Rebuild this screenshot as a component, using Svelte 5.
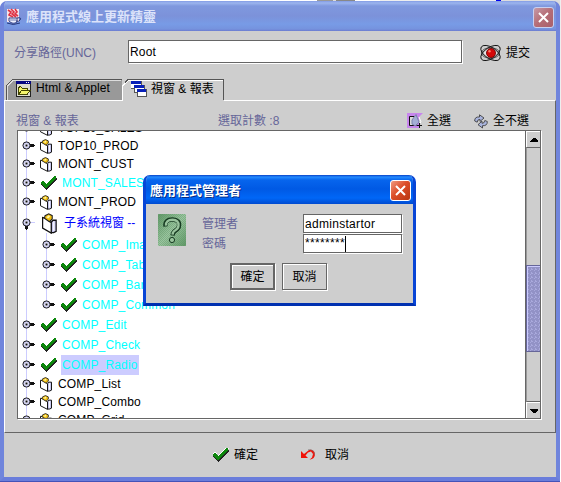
<script>
  const rows = [
    { label: 'TOP10_SALES', kind: 'book', level: 0 },
    { label: 'TOP10_PROD', kind: 'book', level: 0 },
    { label: 'MONT_CUST', kind: 'book', level: 0 },
    { label: 'MONT_SALES', kind: 'check', level: 0 },
    { label: 'MONT_PROD', kind: 'book', level: 0 },
    { label: '子系統視窗 --', kind: 'folder', level: 0 },
    { label: 'COMP_Image', kind: 'check', level: 1 },
    { label: 'COMP_Table', kind: 'check', level: 1 },
    { label: 'COMP_Bar', kind: 'check', level: 1 },
    { label: 'COMP_Common', kind: 'check', level: 1 },
    { label: 'COMP_Edit', kind: 'check', level: 0 },
    { label: 'COMP_Check', kind: 'check', level: 0 },
    { label: 'COMP_Radio', kind: 'check', level: 0, selected: true },
    { label: 'COMP_List', kind: 'book', level: 0 },
    { label: 'COMP_Combo', kind: 'book', level: 0 },
    { label: 'COMP_Grid', kind: 'book', level: 0 }
  ];
</script>

{#snippet check()}
  <svg class="check" width="18" height="15" viewBox="0 0 18 15" shape-rendering="crispEdges">
    <path class="shine" d="M1 6L3 4L6 8L14 0H17" fill="none" stroke="#fff" />
    <path d="M8 12L17 2" stroke="#999" />
    <path d="M0 7L1 8L6 14H7L17 3V1L6 12L1 7Z" fill="#222" />
    <path d="M0 7L2 5H4L6 8L14 0H16V2L6 13Z" fill="#0c870c" />
  </svg>
{/snippet}

{#snippet book()}
  <svg width="100%" height="100%" viewBox="0 0 13 16" preserveAspectRatio="none">
    <path d="M7.5 7L9 5.5H11.5V14L9.5 15H7.5Z" fill="#c4c4ee" stroke="#111" />
    <path d="M9.6 6.5V13.5" stroke="#fff" />
    <path d="M.5 3.5V11.5L7.5 15.3V7.5L3.5 4Z" fill="#fff" stroke="#111" />
    <path d="M2 4L2.5 2L5.5 .6L8.3 2V4.6L6 6.6Z" fill="#f2bf10" stroke="#222" stroke-width=".9" />
    <path d="M3.5 3.2L5.5 1.8L6.7 2.8L5 4.2Z" fill="#fff6a0" />
  </svg>
{/snippet}

<div class="desktop">
  <section class="window">
    <header class="titlebar">
      <svg class="java" width="17" height="18" viewBox="0 0 17 18">
        <rect x="1" y="1" width="12" height="13" fill="#f5e4ea" />
        <path d="M2 2L5 4L3 7L7 9M5 1L8 4L6 6L10 9M9 1L11 4L9 6L12 8" fill="none" stroke="#df3345" stroke-width="1.6" />
        <path d="M3 10H11V14Q7 17 3 13Z" fill="#edf0ff" stroke="#364285" />
        <path d="M11 10Q16 9 14 12Q13 14 10 13M1 15Q7 18 14 15" fill="none" stroke="#263679" />
        <path d="M4 12H10" stroke="#7480b4" />
      </svg>
      <h1>應用程式線上更新精靈</h1>
      <button class="close faded" aria-label="close"><svg width="11" height="11" viewBox="0 0 11 11"><path d="M1 1L10 10M10 1L1 10" /></svg></button>
    </header>

    <div class="path-row">
      <label for="share">分享路徑(UNC)</label>
      <input id="share" value="Root" />
      <button class="plain submit">
        <svg width="24" height="18" viewBox="0 0 24 18" fill="none" stroke="#111" stroke-width=".9">
          <ellipse cx="11.5" cy="9" rx="8" ry="5.5" fill="#e4e4e4" stroke="none" />
          <ellipse cx="11.5" cy="9" rx="11" ry="5.6" transform="rotate(33 11.5 9)" />
          <ellipse cx="11.5" cy="9" rx="11" ry="5.6" transform="rotate(-33 11.5 9)" />
          <ellipse cx="11.5" cy="9" rx="9" ry="5.2" stroke-width=".7" />
          <circle cx="12" cy="9" r="4.5" fill="#d40808" stroke="#700" />
          <circle cx="10.5" cy="7.2" r="1.2" fill="#ff7b66" stroke="none" />
        </svg>
        <span>提交</span>
      </button>
    </div>

    <nav>
      <button class="tab first">
        <svg class="shape" width="116" height="21" viewBox="0 0 116 21" shape-rendering="crispEdges"><path d="M0 21V7L6 0H116V21Z" fill="#999" /><path d="M.5 21V7L6.5 .5H116" fill="none" stroke="#555" /><path d="M1.5 21V7L7 1.5H115" fill="none" stroke="#ddd" /></svg>
        <svg width="16" height="16" viewBox="0 0 16 16" shape-rendering="crispEdges">
          <path d="M0.5 1.5H14.5V15.5H.5Z" fill="#deded0" stroke="#222" /><path d="M0 0H15V3H0Z" fill="#080882" /><path d="M10 1H11V2H10ZM12 1H13V2H12Z" fill="#fff" />
          <path d="M2.5 13.5V6.5L4.5 5.5L6.5 7.5H11.5V9.5H14L11 13.5Z" fill="#f4f56c" stroke="#444600" /><path d="M2.5 13.5L5.5 9.5H14" fill="none" stroke="#444600" />
        </svg>
        <span>Html &amp; Applet</span>
      </button>
      <button class="tab second">
        <svg class="shape" width="102" height="22" viewBox="0 0 102 22" shape-rendering="crispEdges"><path d="M0 22V7L6 0H102V22Z" fill="#cecece" /><path d="M0 7L6 .5H101.5V21" fill="none" stroke="#555" /><path d="M.5 22V7L6.5 1.5H101" fill="none" stroke="#fff" /></svg>
        <svg width="16" height="16" viewBox="0 0 16 16" shape-rendering="crispEdges" fill="#fff">
          <path d="M0 0H10V7H0Z" /><path d="M0 7H10V0" fill="none" stroke="#555" /><path d="M0 0H10V3H0Z" fill="#0820b8" />
          <path d="M3 4H13V11H3Z" /><path d="M3 4V11H13V4" fill="none" stroke="#555" /><path d="M3 4H13V7H3Z" fill="#0820b8" />
          <path d="M6 8H15V15H6Z" /><path d="M6 8V15H15V8" fill="none" stroke="#555" /><path d="M6 8H15V11H6Z" fill="#0820b8" />
        </svg>
        <span>視窗 &amp; 報表</span>
      </button>
    </nav>

    <main>
      <div class="tools">
        <span class="caption">視窗 &amp; 報表</span>
        <span class="count">選取計數 :8</span>
        <button class="plain all">
          <svg width="16" height="16" viewBox="0 0 16 16"><path d="M0 0H16L12 4V15H0Z" fill="#c886ed" /><path d="M2.5 3.5H9.5V12.5H2.5Z" fill="#dcdcdc" stroke="#111" /><path d="M5 11L5 7L9 1.5L12 9L8.5 13Z" fill="#a5aed5" stroke="#7b83ae" /><path d="M12 4L14 9L12 11" fill="none" stroke="#fff" /><path d="M10 12.5H15M12.5 10V15" stroke="#111" shape-rendering="crispEdges" /></svg>
          <span>全選</span>
        </button>
        <button class="plain none">
          <svg width="14" height="15" viewBox="0 0 14 15"><path d="M.7 7Q.5 2.5 5.5 3V.8L10 4L6 7.5V5.5Q3.5 5 3.2 8.2Z" fill="#a9b4dd" stroke="#333" stroke-width=".8" /><path d="M13.3 7.5Q13.5 12 8.5 11.7V14L4 10.7L8 7.2V9.3Q10.5 9.5 10.8 6.5Z" fill="#a9b4dd" stroke="#333" stroke-width=".8" /></svg>
          <span>全不選</span>
        </button>
      </div>

      <div class="pane">
        <ul>
          {#each rows as row}
            <li class={[row.kind, row.level && 'nested']}>
              <svg class="knob" width="14" height="16" viewBox="0 0 14 16">
                {#if row.kind === 'folder'}
                  <path d="M8 7.5H13" stroke="#ccf" shape-rendering="crispEdges" /><path d="M3 11H6V14H5V15H4V14H3Z" fill="#111" shape-rendering="crispEdges" />
                {:else}
                  <path d="M8 6H12V7H13V8H12V9H8Z" fill="#111" shape-rendering="crispEdges" />
                {/if}
                <circle cx="4.5" cy="7.5" r="3.6" fill="#b4b4e2" stroke="#222" />
                <circle cx="4.5" cy="7.5" r="2.2" fill="#f2f2ff" />
                <path d="M3.5 6.5H5.5V8.5H3.5Z" fill="#111" />
              </svg>
              <span class="icon">{#if row.kind === 'check'}{@render check()}{:else}{@render book()}{/if}</span>
              <span class={['name', row.selected && 'selected']}>{row.label}</span>
            </li>
          {/each}
        </ul>
        <div class="scroll">
          <div class="arrow"><svg width="8" height="4" viewBox="0 0 8 4" shape-rendering="crispEdges"><path d="M0 4V3L3 0H5L8 3V4Z" /></svg></div>
          <div class="track"><div class="thumb"></div></div>
          <div class="arrow"><svg width="8" height="4" viewBox="0 0 8 4" shape-rendering="crispEdges"><path d="M0 0V1L3 4H5L8 1V0Z" /></svg></div>
        </div>
      </div>
    </main>

    <footer>
      <button class="plain ok">{@render check()}<span>確定</span></button>
      <button class="plain undo"><svg width="15" height="12" viewBox="0 0 15 12"><path d="M0 2V9H7L4.5 6.5L7 3.5L10 2.5L12 5L11 8.5L8.5 10.7Q14 10 14 5Q13 0 8 1L3 5Z" fill="#f01208" /><path d="M7 .7Q13.5 0 13.5 6" fill="none" stroke="#777" stroke-width=".6" /></svg><span>取消</span></button>
    </footer>
  </section>

  <section class="dialog">
    <header class="dialog-title"><h2>應用程式管理者</h2><button class="close" aria-label="close"><svg width="11" height="11" viewBox="0 0 11 11"><path d="M1 1L10 10M10 1L1 10" /></svg></button></header>
    <div class="form">
      <svg class="question" width="28" height="32" viewBox="0 0 28 32">
        <defs><pattern id="dots" width="2" height="2" patternUnits="userSpaceOnUse"><path d="M0 0H1V1H0ZM1 1H2V2H1Z" fill="#5b8f62" opacity=".4" /></pattern><linearGradient id="green" x2="1" y2="1"><stop stop-color="#5f9866" /><stop offset=".5" stop-color="#9cc7a1" /><stop offset="1" stop-color="#5f9866" /></linearGradient></defs>
        <rect width="28" height="32" rx="1" fill="url(#green)" /><rect width="28" height="32" rx="1" fill="url(#dots)" shape-rendering="crispEdges" />
        <path d="M7.5 12.5Q6.5 5.5 14.5 5.5Q22 6 21 11.5Q21 14.5 17.5 16.5Q15 18 14.5 21.5" fill="none" stroke="#173b22" stroke-width="4.4" /><path d="M8 11.6Q7.5 6 14.5 5.8Q21 6.2 20.5 11.5Q20.5 14.3 17.3 16.2Q14.8 17.5 14.5 20.6" fill="none" stroke="#99c39d" stroke-width="2.4" /><circle cx="14" cy="26" r="2.6" fill="#99c39d" stroke="#173b22" />
      </svg>
      <div class="labels"><label for="admin">管理者</label><label for="pass">密碼</label></div>
      <div class="fields"><input id="admin" value="adminstartor" /><div class="password" id="pass"><span>********</span><i></i></div></div>
    </div>
    <div class="actions"><button class="default">確定</button><button>取消</button></div>
  </section>
</div>

<style>
  :global(body) { margin: 0; overflow: hidden; }
  * { box-sizing: border-box; }
  .desktop { position: relative; width: 561px; height: 482px; padding-top: 1px; overflow: hidden; font: 12px/18px "Liberation Sans", "Noto Sans CJK TC", sans-serif; color: #000; background: linear-gradient(90deg, #fff 317px, #999 317px 333px, #ddd 333px 336px, #888 336px 355px, #fff 355px 380px, #eee 380px 496px, #00e 496px 501px, #ddd 501px 560px, #eee 560px) 0 0 / 100% 240px no-repeat, linear-gradient(90deg, #fff 317px, #999 317px 333px, #ddd 333px 343px, #999 343px 355px, #fff 355px) 0 240px no-repeat; }
  button, input { font: inherit; color: inherit; margin: 0; padding: 0; border: 0; background: none; outline: none; }
  svg { display: block; flex: none; }
  h1, h2 { margin: 0; font-size: 13px; line-height: 20px; font-weight: 700; white-space: nowrap; }
  .window { width: 560px; height: 480px; border: solid #7085dc; border-width: 0 4px 4px; border-bottom-color: #6a7ddb; border-radius: 7px 7px 0 0; background: #cecece; box-shadow: 0 1px #4453b8; overflow: hidden; display: flex; flex-direction: column; }
  .titlebar { height: 30px; flex: none; margin: 0 -4px; display: flex; align-items: center; padding: 2px 6px 0 6px; color: #dce3fa; background: linear-gradient(#829be5, #9cb5ee 2px, #7f98de 5px, #7c92da 15px, #789be6 23px, #7593de 28px, #6c7cd0); }
  .titlebar h1 { margin-left: 3px; flex: 1; }
  .close { width: 21px; height: 21px; border: 1px solid #fff; border-radius: 3px; display: grid; place-items: center; background: linear-gradient(135deg, #f09b82, #dc4d28 45%, #b93712); }
  .close path { stroke: #fff; stroke-width: 2; }
  .close.faded { border-color: #c8d0f0; background: linear-gradient(135deg, #c69aa7, #b56d76 50%, #a9606b); }
  .path-row { display: flex; height: 48px; padding: 9px 0 0 10px; align-items: flex-start; }
  .path-row label { width: 114px; line-height: 26px; color: #669; white-space: nowrap; }
  .path-row input { width: 334px; height: 23px; border: 1px solid #666; box-shadow: 1px 1px #fff; background: #fff; padding-left: 1px; letter-spacing: .15px; }
  .plain { display: flex; align-items: center; white-space: nowrap; color: #000; }
  .submit { margin: 3px 0 0 17px; gap: 3px; }
  .submit span { margin-top: 1px; }
  nav { display: flex; height: 21px; flex: none; padding-left: 2px; position: relative; z-index: 1; }
  .tab { position: relative; display: flex; align-items: center; height: 21px; }
  .tab > *:not(.shape) { position: relative; }
  .tab .shape { position: absolute; left: 0; top: 0; }
  .first { width: 116px; padding: 0 0 1px 10px; gap: 4px; letter-spacing: .1px; }
  .first span { margin-top: -2px; }
  .second { width: 102px; height: 22px; padding: 0 0 2px 9px; gap: 4px; }
  main { height: 333px; flex: none; border: 1px solid #666; border-top-color: #fff; border-left-color: #fff; padding: 0 0 0 12px; }
  .tools { height: 29px; display: flex; align-items: center; padding-top: 11px; line-height: 18px; color: #669; white-space: nowrap; }
  .caption { width: 202px; margin-left: -1px; }
  .count { width: 189px; }
  .all { gap: 4px; width: 67px; }
  .none { gap: 5px; }
  .pane { width: 524px; height: 289px; border: 1px solid #666; box-shadow: 1px 1px #fff; background: #fff; display: flex; overflow: hidden; }
  ul { list-style: none; margin: -12px 0 0; padding: 0; flex: 1; height: 315px; background: linear-gradient(#ccf, #ccf) 8px 0 / 1px 100% no-repeat, linear-gradient(#ccf, #ccf) 28px 114px / 1px 72px no-repeat; }
  li { display: flex; align-items: center; height: 18px; padding-left: 4px; white-space: nowrap; line-height: 18px; letter-spacing: .15px; }
  li.check { height: 20px; color: #0ff; }
  li.folder { height: 24px; color: #00f; letter-spacing: 0; }
  li.nested { padding-left: 24px; }
  .knob { margin-top: -1px; }
  .icon { width: 13px; height: 15px; margin: 0 4px 0 4px; }
  li.check .icon { width: 18px; height: 15px; margin: 0 3px 0 4px; }
  li.folder .icon { width: 16px; height: 21px; margin: 0 5px 0 6px; }
  li .shine { display: none; }
  .name { padding: 0 1px; }
  .selected { background: #ccf; height: 20px; line-height: 20px; width: 78px; }
  .scroll { width: 15px; border-left: 1px solid #666; display: flex; flex-direction: column; }
  .arrow { height: 16px; flex: none; border: solid #fff; border-width: 1px 0 0 1px; display: grid; place-items: center; background: #cecece; }
  .track { flex: 1; border: solid #666; border-width: 1px 0; background: #cecece; padding-top: 117px; border-left: 1px solid #999; }
  .thumb { height: 87px; margin-left: -1px; border: 1px solid #669; border-right: 0; box-shadow: inset 1px 1px #ccf; background: conic-gradient(transparent 75%, #ccf 0) 2px 2px / 2px 2px, #99c; background: repeating-conic-gradient(#ccf 0 25%, transparent 0 50%) 0 0 / 0 0, linear-gradient(90deg, #ccf 1px, transparent 1px) 0 0 / 0 0, linear-gradient(45deg, #a9a9dc 25%, transparent 25% 75%, #a9a9dc 75%) 0 0 / 4px 4px, #9292c6; }
  footer { display: flex; height: 44px; align-items: center; padding-left: 208px; }
  .ok { gap: 4px; width: 89px; }
  .undo { gap: 9px; }
  .dialog { position: absolute; left: 143px; top: 175px; width: 273px; height: 131px; border: solid #0845d6; border-width: 0 3px 3px; border-bottom-color: #0030b0; border-radius: 7px 7px 0 0; background: #cecece; overflow: hidden; }
  .dialog-title { height: 29px; margin: 0 -3px; padding: 2px 5px 0 7px; display: flex; align-items: center; justify-content: space-between; color: #fff; background: linear-gradient(#0840c5, #248bff 2px, #0765ed 5px, #0059e4 14px, #0067f7 23px, #004ad0); text-shadow: 1px 1px #002c87; }
  .form { display: flex; height: 49px; padding: 10px 0 0 12px; }
  .labels { margin-left: 16px; width: 101px; padding-top: 1px; display: flex; flex-direction: column; gap: 2px; color: #669; }
  .fields { display: flex; flex-direction: column; gap: 1px; }
  .fields input, .password { width: 99px; height: 19px; border: 1px solid #666; background: #fff; box-shadow: 1px 1px #fff; padding-left: 1px; letter-spacing: .3px; }
  .password { display: flex; line-height: 17px; letter-spacing: .34px; }
  .password i { width: 1px; height: 16px; margin-top: 1px; background: #000; }
  .actions { display: flex; gap: 7px; padding: 10px 0 0 84px; }
  .actions button { width: 45px; height: 27px; border: 1px solid #666; box-shadow: inset 1px 1px #fff, 1px 1px #fff; }
  .actions .default { border-width: 2px; }
</style>
